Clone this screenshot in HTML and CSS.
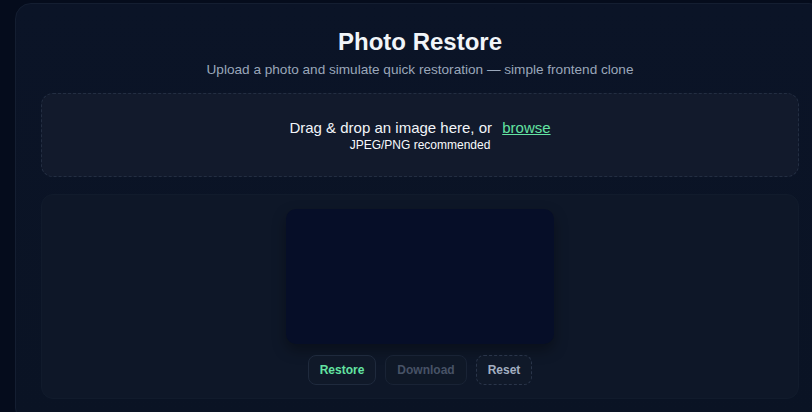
FILE: index.html
```html
<!DOCTYPE html>
<html lang="en">
<head>
<meta charset="utf-8">
<title>Photo Restore</title>
<link rel="stylesheet" href="styles.css">
</head>
<body>
<main class="app">
  <header class="head">
    <h1 class="title">Photo Restore</h1>
    <p class="subtitle">Upload a photo and simulate quick restoration — simple frontend clone</p>
  </header>
  <section class="dropzone">
    <p class="drop-main">Drag &amp; drop an image here, or <a class="browse" href="#">browse</a></p>
    <p class="drop-hint">JPEG/PNG recommended</p>
  </section>
  <section class="workspace">
    <div class="preview"></div>
    <div class="actions">
      <button class="btn btn-restore">Restore</button>
      <button class="btn btn-disabled" disabled>Download</button>
      <button class="btn btn-reset">Reset</button>
    </div>
  </section>
</main>
</body>
</html>
```

FILE: styles.css
```css
html, body {
  margin: 0;
  padding: 0;
  overflow: hidden;
}
body {
  background: #050c1c;
  font-family: "Liberation Sans", Arial, sans-serif;
  color: #e6ebf2;
  height: 412px;
  padding: 3px 0 0 15px;
  box-sizing: border-box;
}
.app {
  width: 810px;
  min-height: 420px;
  box-sizing: border-box;
  background: linear-gradient(180deg, #0b1427 0%, #0a1324 100%);
  border: 1px solid #141e31;
  border-radius: 16px;
  padding: 24px 25px;
  display: flex;
  flex-direction: column;
}
.head {
  text-align: center;
}
.title {
  margin: 0;
  font-size: 24px;
  line-height: 28px;
  font-weight: 700;
  color: #f1f5f9;
}
.subtitle {
  margin: 5px 0 0;
  font-size: 13.6px;
  line-height: 17px;
  color: #9aa7ba;
}
.dropzone {
  margin-top: 15px;
  height: 84px;
  box-sizing: border-box;
  border: 1px dashed #232e42;
  border-radius: 12px;
  background: #121a2c;
  display: flex;
  flex-direction: column;
  justify-content: center;
  align-items: center;
  text-align: center;
}
.drop-main {
  margin: 0;
  font-size: 15px;
  line-height: 18px;
  color: #f1f5f9;
}
.browse {
  margin-left: 6px;
  color: #63e3a2;
  text-decoration: underline;
}
.drop-hint {
  margin: 1px 0 0;
  font-size: 12px;
  line-height: 14px;
  color: #f8fafc;
}
.workspace {
  margin-top: 17px;
  background: #0e1728;
  border: 1px solid #111b2c;
  border-radius: 12px;
  padding: 14px 0 13px;
  display: flex;
  flex-direction: column;
  align-items: center;
  gap: 11px;
}
.preview {
  width: 268px;
  height: 135px;
  background: #060e28;
  border-radius: 10px;
  box-shadow: 0 6px 14px rgba(0, 0, 0, 0.35);
}
.actions {
  display: flex;
  gap: 9px;
}
.btn {
  font-family: "Liberation Sans", Arial, sans-serif;
  font-size: 12px;
  font-weight: 700;
  line-height: 15px;
  padding: 7px 11px 6px;
  border-radius: 8px;
  border: 1px solid #1f2a3d;
  background: #101929;
  cursor: pointer;
}
.btn-restore {
  color: #63e3a2;
}
.btn-disabled {
  color: #475266;
  background: #0f1827;
  border-color: #192335;
}
.btn-reset {
  color: #a3afc1;
  border-style: dashed;
  border-color: #2a354a;
}
```
